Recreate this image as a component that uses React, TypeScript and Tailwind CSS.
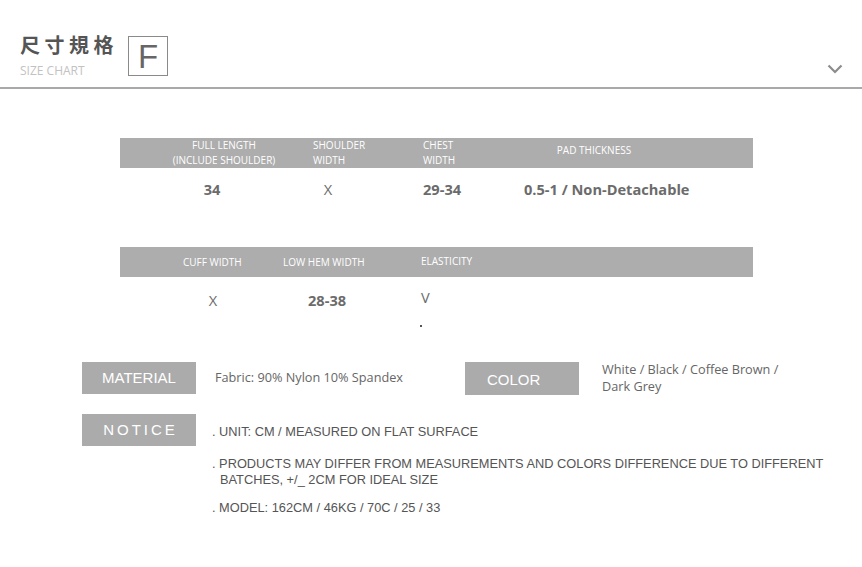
import React from 'react';

const sans = { fontFamily: '"Open Sans", "Noto Sans", sans-serif' };

export default function App() {
  return (
    <div className="w-[862px] h-[567px] bg-white overflow-hidden">
      {/* Header */}
      <div className="h-[89px] flex border-b-2 border-[#a9a9a9]">
        <div className="pl-[20px] pt-[33px]">
          <div className="text-[20px] leading-[24px] font-bold tracking-[4.5px] text-[#555] font-['Noto_Sans_CJK_TC',sans-serif]">
            尺寸規格
          </div>
          <div className="mt-[6px] text-[12px] leading-[16px] text-[#c2c2c2] font-['Open_Sans',sans-serif]">SIZE CHART</div>
        </div>
        <div className="ml-[10px] mt-[36px] w-[40px] h-[40px] border border-[#8a8a8a] flex items-center justify-center text-[33px] text-[#666] font-['Liberation_Sans',sans-serif] leading-none">
          F
        </div>
        <div className="flex-1" />
        <div className="pt-[64px] pr-[19px]">
          <svg width="16" height="10" viewBox="0 0 16 10" fill="none">
            <path d="M1.5 1.5 L8 8 L14.5 1.5" stroke="#8c8c8c" strokeWidth="2.2" />
          </svg>
        </div>
      </div>

      {/* Size table */}
      <div className="pt-[49px] font-['Open_Sans',sans-serif]">
        <div className="ml-[120px] w-[633px] h-[30px] bg-[#adadad] flex text-white text-[10px] leading-[15px]">
          <div className="ml-[50px] w-[108px] text-center whitespace-nowrap">
            FULL LENGTH
            <br />
            (INCLUDE SHOULDER)
          </div>
          <div className="ml-[35px] w-[110px]">
            SHOULDER
            <br />
            WIDTH
          </div>
          <div className="w-[80px]">
            CHEST
            <br />
            WIDTH
          </div>
          <div className="w-[182px] text-center pt-[5px]">PAD THICKNESS</div>
        </div>
        <div className="h-[44px] flex items-center text-[14.6px] text-[#6b6b6b]">
          <div className="ml-[182px] w-[60px] text-center font-bold">34</div>
          <div className="ml-[56px] w-[60px] text-center">X</div>
          <div className="ml-[65px] w-[101px] font-bold">29-34</div>
          <div className="whitespace-nowrap font-bold">0.5-1 / Non-Detachable</div>
        </div>

        <div className="mt-[35px] ml-[120px] w-[633px] h-[30px] bg-[#adadad] flex items-center text-white text-[10px] leading-[15px]">
          <div className="ml-[63px] w-[100px]">CUFF WIDTH</div>
          <div className="w-[138px]">LOW HEM WIDTH</div>
          <div className="-mt-[2px]">ELASTICITY</div>
        </div>
        <div className="h-[48px] flex items-center text-[14.6px] text-[#6b6b6b]">
          <div className="ml-[182px] w-[62px] text-center">X</div>
          <div className="ml-[64px] w-[113px] font-bold">28-38</div>
          <div className="-mt-[6px]">V</div>
        </div>
        <div className="h-[37px]">
          <div className="ml-[420px] w-[2px] h-[2px] bg-[#555]" />
        </div>
      </div>

      {/* Material / color */}
      <div className="flex">
        <div className="ml-[82px] w-[114px] h-[32px] bg-[#ababab] flex items-center justify-center text-white text-[15px] font-['Liberation_Sans',sans-serif]">
          MATERIAL
        </div>
        <div className="ml-[19px] w-[250px] pt-[7px] text-[12.7px] leading-[17px] text-[#666]" style={sans}>
          Fabric: 90% Nylon 10% Spandex
        </div>
        <div className="w-[114px] h-[33px] bg-[#ababab] flex items-center pl-[22px] pt-[4px] text-white text-[15px] font-['Liberation_Sans',sans-serif]">
          COLOR
        </div>
        <div className="ml-[23px] -mt-[1px] text-[12.7px] leading-[17px] text-[#666]" style={sans}>
          White / Black / Coffee Brown /
          <br />
          Dark Grey
        </div>
      </div>

      {/* Notice */}
      <div className="flex mt-[19px]">
        <div className="ml-[82px] w-[114px] h-[32px] bg-[#ababab] flex items-center justify-center text-white text-[15px] tracking-[3px] pl-[3px] font-['Liberation_Sans',sans-serif]">
          NOTICE
        </div>
        <div className="ml-[16px] pt-[10px] text-[12.8px] leading-[16px] text-[#555] font-['Liberation_Sans',sans-serif] whitespace-nowrap">
          <div>. UNIT: CM / MEASURED ON FLAT SURFACE</div>
          <div className="mt-[16px]">. PRODUCTS MAY DIFFER FROM MEASUREMENTS AND COLORS DIFFERENCE DUE TO DIFFERENT</div>
          <div className="ml-[8px]">BATCHES, +/_ 2CM FOR IDEAL SIZE</div>
          <div className="mt-[12px]">. MODEL: 162CM / 46KG / 70C / 25 / 33</div>
        </div>
      </div>
    </div>
  );
}
